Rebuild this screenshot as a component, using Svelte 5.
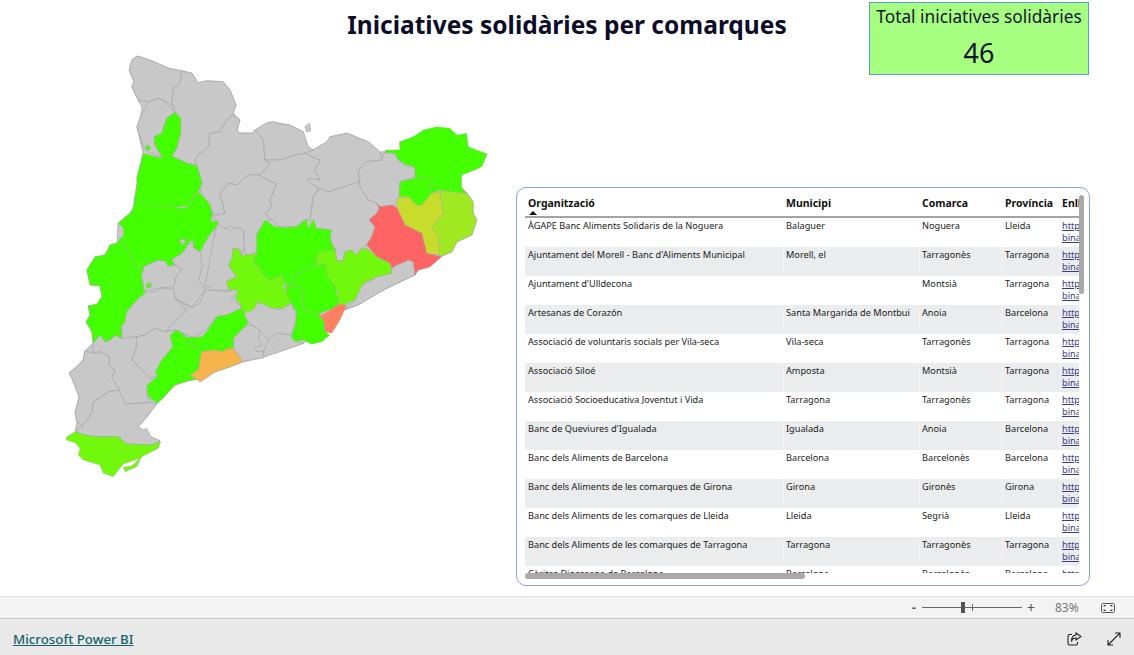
<script lang="ts">
  // trace origins: each outline was read off a crop of the page at 3x
  const A = [60, 50];
  const B = [280, 110];
  const C = [60, 260];
  const D = [215, 205];
  const E = [75, 190];

  const GRAY = '#c8c8c8';
  const GREEN = '#44ff00';
  const LIME = '#72f80c';

  // whole country, in page pixels, so no holes show between the comarques
  const silhouette = '132,60 137,56 150,60 168,68 182,71 192,73 198,83 207,81 223,82 230,90 236,105 233,113 240,120 237,130 240,133 252,133 255,130 267,123 273,122 290,125 303,132 308,147 313,150 327,142 330,137 347,133 368,142 380,152 400,150 430,165 462,188 467,193 473,202 473,213 477,220 472,235 457,242 452,252 440,257 430,267 418,270 415,275 400,282 380,292 358,305 345,310 304,343 263,357 243,362 230,367 215,372 200,382 197,379 188,381 175,385 162,399 157,403 147,417 138,427 143,430 151,437 160,441 158,448 120,440 83,445 75,432 77,422 75,413 79,397 72,378 69,373 75,368 83,360 85,351 93,343 92,332 86,322 90,315 88,306 97,304 102,297 100,286 90,285 87,270 95,257 105,255 110,245 117,243 118,223 130,213 133,208 134,202 137,183 137,178 143,153 137,127 140,118 142,107 138,100 132,87 134,82 129,70';

  const comarques = [
    { fill: GRAY, o: A, p: '215,30 232,18 270,30 325,55 365,62 360,100 340,115 335,165 300,145 265,155 235,150 215,110 222,95 208,60' },
    { fill: GRAY, o: A, p: '265,155 300,145 340,180 345,187 320,205 305,250 282,260 285,285 305,322 255,300 250,290 230,232 240,205' },
    { fill: GRAY, o: A, p: '365,62 395,70 415,98 440,92 490,95 510,120 528,165 520,190 500,210 480,245 450,250 445,290 415,315 405,330 410,345 380,340 335,318 350,295 362,250 362,205 345,187 340,165 335,165 340,115 360,100' },
    { fill: GRAY, o: A, p: '520,195 540,210 530,240 540,250 575,250 585,240 610,270 615,330 630,340 600,375 565,375 530,405 505,400 480,430 495,490 470,495 458,490 445,460 420,430 425,395 410,345 405,330 415,315 445,290 450,250 480,245 500,210' },
    { fill: GRAY, o: A, p: '480,430 505,400 530,405 565,375 600,375 630,395 650,400 640,425 630,450 635,470 615,490 635,510 615,515 590,550 605,580 585,610 560,615 550,590 552,545 510,528 478,545 470,520 458,490 470,495 495,490' },
    { fill: GRAY, o: B, p: '-75,60 -40,38 -20,35 0,42 30,45 70,65 85,110 100,120 75,130 50,135 0,150 -45,150 -50,90' },
    { fill: GRAY, o: B, p: '75,50 88,40 92,62 80,65' },
    { fill: GRAY, o: B, p: '-45,150 -30,160 -60,195 -30,215 -10,220 -20,245 -30,270 -25,290 -45,310 -25,330 0,350 50,350 75,328 90,330 100,260 115,235 80,210 85,205 120,210 105,180 120,150 75,130 50,135 0,150' },
    { fill: GRAY, o: B, p: '100,120 140,95 150,80 200,70 265,95 300,125 305,150 260,155 240,175 235,190 240,215 180,235 145,245 120,235 115,235 80,210 85,205 120,210 105,180 120,150 75,130' },
    { fill: GRAY, o: B, p: '305,150 315,125 345,130 355,150 380,170 405,170 405,200 360,215 358,260 350,265 352,295 338,285 300,290 290,280 265,270 245,240 235,215 240,215 235,190 240,175 260,155' },
    { fill: GRAY, o: B, p: '120,235 145,245 180,235 235,215 245,240 265,270 290,280 298,295 290,310 268,330 285,350 275,380 260,405 240,420 230,435 215,420 195,425 190,452 170,452 165,415 150,400 150,360 105,355 90,330 100,260' },
    { fill: GRAY, o: B, p: '335,490 335,475 350,465 385,450 400,455 405,495 360,515 300,545 235,585 195,597 225,570 240,530 290,500' },
    { fill: GRAY, o: D, p: '6,54 20,65 45,78 60,66 85,75 88,130 78,150 75,135 55,130 50,165 40,180 65,215 33,230 45,255 0,255 -30,240 -20,190 -10,130' },
    { fill: GRAY, o: E, p: '208,228 250,210 270,212 280,228 298,225 322,238 305,255 295,295 260,292 240,298 220,290 205,303 205,285 198,260' },
    { fill: GRAY, o: E, p: '322,238 298,225 290,208 320,190 335,165 358,155 355,172 375,185 382,228 372,270 392,297 375,320 350,352 320,335 298,325 295,295 305,255' },
    { fill: GRAY, o: C, p: '245,95 260,92 285,95 300,85 340,85 345,115 380,150 345,185 315,215 285,205 255,225 230,230 185,240 185,200 200,155 235,115' },
    { fill: GRAY, o: C, p: '345,115 392,143 420,130 437,90 510,95 525,85 535,100 512,115 540,135 545,145 500,165 470,170 440,210 400,232 370,220 345,210 315,215 345,185 380,150' },
    { fill: GRAY, o: C, p: '545,165 590,125 620,130 660,150 695,130 710,175 695,225 650,220 625,240 600,210 575,195' },
    { fill: GRAY, o: C, p: '625,240 650,220 695,225 710,245 732,250 610,292 612,270' },
    { fill: GRAY, o: C, p: '520,235 540,205 575,195 600,210 595,235 605,255 585,265 590,275 610,272 612,293 548,305 520,265' },
    { fill: GRAY, o: C, p: '285,205 315,215 345,210 370,222 338,262 310,295 295,345 270,355 215,300 228,262 230,232 255,225' },
    { fill: GRAY, o: C, p: '120,222 135,245 150,240 165,225 185,235 230,230 228,262 215,300 280,362 295,345 290,365 262,380 260,400 270,428 195,432 175,390 155,350 165,330 148,318 148,290 120,275 100,280 100,250' },
    { fill: GRAY, o: C, p: '100,280 120,275 148,290 148,318 165,330 155,350 178,390 148,395 100,425 95,460 68,495 50,485 45,458 58,410 35,355 28,340 45,325 70,300 75,272' },
    { fill: GRAY, o: C, p: '100,425 148,395 178,390 195,432 270,428 292,430 260,470 235,500 250,510 260,505 272,530 300,542 275,555 200,552 175,530 110,530 75,525 45,515 68,495 95,460' },
    { fill: LIME, o: C, p: '20,530 45,515 75,525 110,530 175,530 200,552 275,555 302,545 295,565 245,590 230,620 195,635 190,622 215,618 240,595 190,612 160,650 130,640 120,615 70,600 55,585 60,565 45,548 18,540' },
    { fill: GREEN, o: A, p: '345,187 362,205 362,250 350,295 335,318 380,340 412,348 418,372 426,395 418,420 400,440 382,468 320,475 222,455 232,400 230,385 250,310 305,325 305,318 285,285 282,260 305,250 320,205' },
    { fill: GREEN, o: A, p: '255,290 265,285 273,295 262,302' },
    { fill: GREEN, o: E, p: '178,35 250,48 320,55 338,50 345,35 370,5 390,25 405,45 412,70 408,95 432,93 420,115 400,140 375,185 355,172 358,155 345,152 332,175 320,190 290,208 298,225 280,228 270,212 250,210 208,228 183,232 135,145 145,140 145,115 130,100 165,70 175,55' },
    { fill: GRAY, o: E, p: '313,150 328,147 332,157 322,165' },
    { fill: GREEN, o: E, p: '135,145 183,232 208,228 198,260 205,285 205,303 215,305 190,325 155,365 150,395 138,410 140,445 120,435 105,450 90,455 75,435 55,460 50,425 33,395 45,375 40,348 65,343 80,320 75,288 45,285 35,240 60,200 90,195 105,165 125,160' },
    { fill: GREEN, o: E, p: '212,285 225,277 230,285 218,295' },
    { fill: GREEN, o: B, p: '315,120 360,120 358,95 400,80 430,60 470,50 510,55 530,75 560,70 565,110 590,120 622,132 605,170 585,180 545,195 545,235 560,250 510,245 480,240 455,250 455,215 440,200 405,205 405,170 380,165 355,150 345,130 320,130' },
    { fill: GREEN, o: B, p: '360,215 405,205 440,200 455,215 455,250 425,285 410,285 385,260 358,260' },
    { fill: '#c8dc2c', o: B, p: '350,265 385,260 410,285 425,285 455,250 480,245 490,310 455,355 475,375 480,435 440,430 425,370 375,345 352,295' },
    { fill: '#a0e820', o: B, p: '480,240 510,245 560,250 580,275 580,310 590,330 575,375 530,395 515,425 480,440 475,375 455,355 490,310' },
    { fill: '#ff6464', o: B, p: '290,280 300,290 338,285 352,295 375,345 425,370 440,430 485,440 450,470 415,480 405,495 400,455 385,450 350,465 335,475 330,460 290,440 260,405 275,380 285,350 268,330 290,310 298,295' },
    { fill: LIME, o: B, p: '115,420 165,415 170,452 190,452 195,425 215,420 230,435 240,420 260,415 290,440 330,460 335,490 290,500 250,520 225,570 190,585 175,580 170,540 140,495 135,463 105,467' },
    { fill: LIME, o: D, p: '55,130 75,135 75,150 100,150 125,145 115,175 130,180 145,210 165,225 200,210 210,235 205,245 230,290 205,310 170,310 130,290 115,315 85,325 75,295 60,280 70,255 45,255 33,230 65,215 40,180 50,165' },
    { fill: GREEN, o: D, p: '125,90 150,45 180,65 215,68 245,65 275,42 280,70 297,42 303,70 350,75 345,100 358,135 310,140 300,182 240,210 232,243 210,235 200,210 165,225 145,210 130,180 115,175 125,145' },
    { fill: GREEN, o: D, p: '240,210 300,182 330,178 335,210 360,245 372,298 350,312 320,322 290,325 265,310 265,265 250,245 232,243' },
    { fill: GREEN, o: D, p: '210,240 232,243 250,245 265,265 265,310 290,325 320,322 312,335 327,345 330,380 345,390 320,410 290,418 265,405 240,410 228,395 240,365 245,320 225,290 215,260' },
    { fill: '#ff8060', o: D, p: '372,298 395,300 375,345 350,385 330,380 327,345 312,335 350,312' },
    { fill: GREEN, o: C, p: '372,222 382,232 425,232 440,215 470,170 500,165 545,145 565,190 520,235 520,265 495,268 490,275 465,270 425,275 415,262 378,245' },
    { fill: GREEN, o: C, p: '330,225 350,210 370,222 378,245 415,262 425,275 415,330 390,345 412,358 385,362 345,375 305,418 292,430 265,410 260,378 295,345 285,340 305,300 310,295 338,262' },
    { fill: '#f8b44c', o: C, p: '425,275 465,270 490,275 495,268 520,265 548,305 510,320 465,335 420,365 412,358 390,345 415,330' }
  ];

  function toScreen(c: { o: number[]; p: string }) {
    return c.p
      .split(' ')
      .map((pair) => {
        const [x, y] = pair.split(',').map(Number);
        return `${(x / 3 + c.o[0]).toFixed(1)},${(y / 3 + c.o[1]).toFixed(1)}`;
      })
      .join(' ');
  }

  const rows = [
    ['ÀGAPE Banc Aliments Solidaris de la Noguera', 'Balaguer', 'Noguera', 'Lleida'],
    ["Ajuntament del Morell - Banc d'Aliments Municipal", 'Morell, el', 'Tarragonès', 'Tarragona'],
    ["Ajuntament d'Ulldecona", '', 'Montsià', 'Tarragona'],
    ['Artesanas de Corazón', 'Santa Margarida de Montbui', 'Anoia', 'Barcelona'],
    ['Associació de voluntaris socials per Vila-seca', 'Vila-seca', 'Tarragonès', 'Tarragona'],
    ['Associació Siloé', 'Amposta', 'Montsià', 'Tarragona'],
    ['Associació Socioeducativa Joventut i Vida', 'Tarragona', 'Tarragonès', 'Tarragona'],
    ["Banc de Queviures d'Igualada", 'Igualada', 'Anoia', 'Barcelona'],
    ['Banc dels Aliments de Barcelona', 'Barcelona', 'Barcelonès', 'Barcelona'],
    ['Banc dels Aliments de les comarques de Girona', 'Girona', 'Gironès', 'Girona'],
    ['Banc dels Aliments de les comarques de Lleida', 'Lleida', 'Segrià', 'Lleida'],
    ['Banc dels Aliments de les comarques de Tarragona', 'Tarragona', 'Tarragonès', 'Tarragona'],
    ['Càritas Diocesana de Barcelona', 'Barcelona', 'Barcelonès', 'Barcelona']
  ];
</script>

<div class="page">
  <div class="report">
    <header class="top">
      <h1>Iniciatives solidàries per comarques</h1>
      <div class="kpi">
        <div class="kpi-title">Total iniciatives solidàries</div>
        <div class="kpi-value">46</div>
      </div>
    </header>

    <div class="body">
      <div class="map-col">
        <svg class="map" viewBox="60 50 440 430" width="440" height="430">
          <polygon points={silhouette} fill={GRAY} />
          {#each comarques as c}
            <polygon points={toScreen(c)} fill={c.fill} class:tint={c.fill !== GRAY} />
          {/each}
        </svg>
      </div>

      <div class="table-box">
        <div class="table-clip">
          <table>
            <colgroup>
              <col style="width: 258px" />
              <col style="width: 136px" />
              <col style="width: 83px" />
              <col style="width: 57px" />
              <col style="width: 40px" />
            </colgroup>
            <thead>
              <tr>
                <th>Organització<span class="sort"></span></th>
                <th>Municipi</th>
                <th>Comarca</th>
                <th>Província</th>
                <th>Enllaç</th>
              </tr>
            </thead>
            <tbody>
              {#each rows as row, i}
                <tr class:odd={i % 2 === 1}>
                  {#each row as cell}
                    <td>{cell}</td>
                  {/each}
                  <td class="link"><a href="#top">https://</a><br /><a href="#top">binariaweb</a></td>
                </tr>
              {/each}
            </tbody>
          </table>
        </div>
        <div class="scroll-v"></div>
        <div class="scroll-h"></div>
      </div>
    </div>
  </div>

  <div class="zoom-bar">
    <span class="minus">-</span>
    <div class="slider"><span class="tick"></span><span class="thumb"></span></div>
    <span class="plus">+</span>
    <span class="pct">83%</span>
    <svg class="fit" width="14" height="10" viewBox="0 0 14 10" fill="none" stroke="#555" stroke-width="1">
      <rect x="0.5" y="0.5" width="13" height="9" rx="1" />
      <path d="M3 4V2.5H5M9 2.5H11V4M11 6V7.5H9M5 7.5H3V6" />
    </svg>
  </div>

  <footer class="footer">
    <a class="brand" href="#top">Microsoft Power BI</a>
    <div class="actions">
      <svg width="15" height="14" viewBox="0 0 15 14" fill="none" stroke="#222" stroke-width="1.1">
        <path d="M5 2.5H2.5A1.5 1.5 0 0 0 1 4V11.5A1.5 1.5 0 0 0 2.5 13H9A1.5 1.5 0 0 0 10.5 11.5V10" />
        <path d="M9 1L14 4.5L9 8V6C6.5 6 5 7.5 4.5 9.5C4.5 6 6 3.2 9 3Z" />
      </svg>
      <svg width="14" height="14" viewBox="0 0 14 14" fill="none" stroke="#222" stroke-width="1.1">
        <path d="M1 13L13 1M8 1H13V6M1 8V13H6" />
      </svg>
    </div>
  </footer>
</div>

<style>
  :global(body) {
    margin: 0;
    background: #fff;
    font-family: 'Noto Sans', 'Open Sans', sans-serif;
  }

  .page {
    display: flex;
    flex-direction: column;
    height: 655px;
    overflow: hidden;
  }

  .report {
    height: 596px;
    flex: none;
  }

  .top {
    display: grid;
    grid-template-columns: 1fr auto 1fr;
    height: 50px;
  }

  h1 {
    grid-column: 2;
    margin: 8px 0 0;
    font-size: 24.5px;
    line-height: 34px;
    font-weight: 700;
    color: #0c0c28;
    white-space: nowrap;
  }

  .kpi {
    grid-column: 3;
    justify-self: end;
    box-sizing: border-box;
    width: 220px;
    height: 73px;
    margin: 2px 45px 0 0;
    background: #a6ff80;
    border: 1px solid #5f9bd3;
    text-align: center;
    color: #14142e;
  }

  .kpi-title {
    font-size: 17.3px;
    line-height: 24px;
    margin-top: 2px;
    white-space: nowrap;
  }

  .kpi-value {
    font-size: 27px;
    line-height: 36px;
    margin-top: 6px;
  }

  .body {
    display: grid;
    grid-template-columns: 516px 574px;
    height: 546px;
  }

  .map-col {
    padding-left: 60px;
  }

  .map {
    display: block;
  }

  .map polygon {
    stroke: #a6a6a6;
    stroke-width: 0.7;
    stroke-linejoin: round;
  }

  .map polygon.tint {
    stroke-opacity: 0.55;
  }

  .table-box {
    position: relative;
    box-sizing: border-box;
    margin-top: 137px;
    height: 399px;
    border: 1px solid #86a8d0;
    border-radius: 10px;
    background: #fff;
  }

  .table-clip {
    margin: 7px 0 0 8px;
    width: 554px;
    height: 378px;
    overflow: hidden;
  }

  table {
    table-layout: fixed;
    width: 574px;
    border-collapse: separate;
    border-spacing: 0;
    color: #222;
  }

  th {
    position: relative;
    box-sizing: border-box;
    height: 23px;
    padding: 0 0 5px 3px;
    text-align: left;
    font-size: 10.5px;
    line-height: 14px;
    font-weight: 700;
    color: #111;
    border-bottom: 2px solid #a4a4a8;
    white-space: nowrap;
    overflow: hidden;
  }

  .sort {
    position: absolute;
    left: 4px;
    bottom: 1px;
    border-left: 4px solid transparent;
    border-right: 4px solid transparent;
    border-bottom: 4px solid #111;
  }

  td {
    box-sizing: border-box;
    height: 29px;
    padding: 2px 0 0 3px;
    vertical-align: top;
    font-size: 9.2px;
    line-height: 12px;
    white-space: nowrap;
    overflow: hidden;
  }

  tr.odd td {
    background: #ebecee;
    padding-left: 2px;
    border-left: 1px solid #f1f1f3;
  }

  tr.odd td:first-child {
    padding-left: 3px;
    border-left: 0;
  }

  .link a {
    color: #3c3a86;
  }

  .scroll-v {
    position: absolute;
    top: 7px;
    right: 5px;
    width: 5px;
    height: 99px;
    border-radius: 3px;
    background: #a9a9a9;
  }

  .scroll-h {
    position: absolute;
    left: 8px;
    bottom: 6px;
    width: 280px;
    height: 6px;
    border-radius: 3px;
    background: #a9a9a9;
  }

  .zoom-bar {
    display: flex;
    align-items: center;
    justify-content: flex-end;
    box-sizing: border-box;
    height: 23px;
    flex: none;
    padding-right: 19px;
    background: #f3f3f3;
    border-top: 1px solid #e2e2e2;
    border-bottom: 1px solid #c9c9c9;
    color: #666;
    font-size: 12px;
  }

  .minus {
    width: 7px;
    font-weight: 700;
    color: #555;
  }

  .slider {
    position: relative;
    width: 100px;
    height: 1px;
    margin-left: 3px;
    background: #666;
  }

  .tick {
    position: absolute;
    left: 50px;
    top: -3px;
    width: 1px;
    height: 7px;
    background: #666;
  }

  .thumb {
    position: absolute;
    left: 39px;
    top: -5px;
    width: 4px;
    height: 11px;
    background: #555;
  }

  .plus {
    width: 10px;
    margin-left: 5px;
    font-size: 14px;
    line-height: 14px;
    color: #555;
  }

  .pct {
    width: 24px;
    margin: 0 0 0 18px;
    color: #777;
  }

  .fit {
    margin-left: 22px;
  }

  .footer {
    display: flex;
    align-items: center;
    justify-content: space-between;
    flex: 1;
    padding: 4px 13px 0;
    background: #e9e9e9;
  }

  .brand {
    color: #14636c;
    font-size: 13.3px;
    font-weight: 500;
    text-decoration: underline;
  }

  .actions {
    display: flex;
    gap: 25px;
  }
</style>
